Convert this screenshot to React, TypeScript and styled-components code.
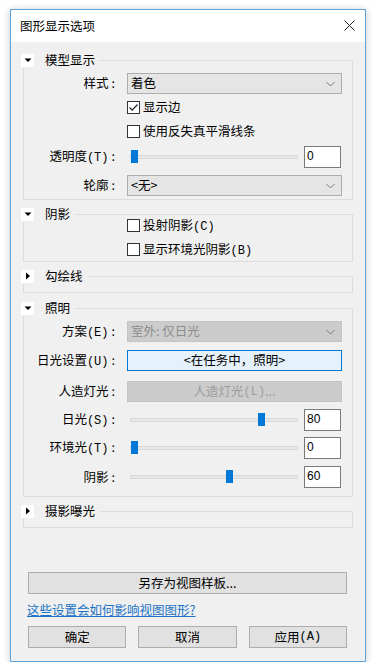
import React from "react";
import styled, { createGlobalStyle } from "styled-components";

const GlobalStyle = createGlobalStyle`
    html, body {
        margin: 0;
        background: #ffffff;
    }
    body {
        font-family: "Noto Sans CJK SC", "Liberation Sans", sans-serif;
        font-size: 12.5px;
        color: #000;
    }
    * {
        box-sizing: border-box;
    }
`;

const Page = styled.div`
    padding: 9px 0 0 10px;
`;

const Dialog = styled.div`
    width: 356px;
    height: 653px;
    border: 1px solid #5ea3db;
    box-shadow: 0 1px 8px rgba(0, 0, 0, 0.22);
    background: #f0f0f0;
    display: flex;
    flex-direction: column;
`;

const TitleBar = styled.div`
    height: 32px;
    background: #ffffff;
    display: flex;
    align-items: center;
    justify-content: space-between;
    padding: 0 10px 0 9px;
    line-height: 1;
`;

const Close = styled.div`
    width: 11px;
    height: 11px;
    display: flex;
    margin-top: -1px;
`;

const Body = styled.div`
    flex: 1;
    display: flex;
    flex-direction: column;
    padding: 18px 12px 13px;
`;

const Group = styled.div<{ $mt: number; $pb: number }>`
    border: 1px solid #dcdcdc;
    margin-top: ${(p) => p.$mt}px;
    padding-bottom: ${(p) => p.$pb}px;
    display: flex;
    flex-direction: column;
`;

const Header = styled.div`
    align-self: flex-start;
    display: flex;
    align-items: center;
    height: 16px;
    margin: -9px 0 -7px -3px;
    padding-right: 5px;
    background: #f0f0f0;
    line-height: 1;
`;

const Toggle = styled.div`
    width: 13px;
    height: 13px;
    background: #ffffff;
    display: flex;
    align-items: center;
    justify-content: center;
`;

const HeadText = styled.span`
    margin-left: 11px;
`;

const Row = styled.div<{ $mt: number }>`
    display: grid;
    grid-template-columns: 91px 1fr;
    column-gap: 12px;
    align-items: center;
    height: 21px;
    margin-top: ${(p) => p.$mt}px;
    padding-right: 10px;
    line-height: 1;
`;

const Label = styled.span`
    text-align: right;
    white-space: nowrap;
`;

const Colon = styled.span`
    margin-left: 3px;
`;

const Key = styled.span`
    font-family: "Liberation Mono", monospace;
    font-size: 12px;
`;

const Select = styled.div<{ $disabled?: boolean }>`
    height: 21px;
    display: flex;
    align-items: center;
    justify-content: space-between;
    padding: 0 6px 0 3px;
    border: 1px solid ${(p) => (p.$disabled ? "#c4c4c4" : "#adadad")};
    background: ${(p) => (p.$disabled ? "#cccccc" : "#e5e5e5")};
    color: ${(p) => (p.$disabled ? "#8d8d8d" : "#000")};
`;

const WideButton = styled.div<{ $variant: "focus" | "disabled" }>`
    height: 21px;
    display: flex;
    align-items: center;
    justify-content: center;
    border: 1px solid ${(p) => (p.$variant === "focus" ? "#0078d7" : "#c4c4c4")};
    background: ${(p) => (p.$variant === "focus" ? "#e5f1fb" : "#cccccc")};
    color: ${(p) => (p.$variant === "focus" ? "#000" : "#9c9c9c")};
`;

const CheckLine = styled.div`
    display: flex;
    align-items: center;
`;

const Box = styled.div`
    width: 13px;
    height: 13px;
    border: 1px solid #333333;
    background: #ffffff;
    display: flex;
    align-items: center;
    justify-content: center;
    margin-right: 3px;
`;

const SliderLine = styled.div`
    display: flex;
    align-items: center;
`;

const Track = styled.div`
    flex: 1;
    height: 4px;
    margin-left: 3px;
    background: #e7e7e7;
    border: 1px solid #d9d9d9;
    position: relative;
`;

const Thumb = styled.div`
    position: absolute;
    top: -6px;
    width: 7px;
    height: 13px;
    background: #0078d7;
`;

const NumBox = styled.div`
    width: 37px;
    height: 22px;
    margin: 0 1px 0 6px;
    border: 1px solid #7a7a7a;
    background: #ffffff;
    padding: 3px 0 0 2px;
    font-family: "Liberation Sans", Arial, sans-serif;
    font-size: 12px;
`;

const Footer = styled.div`
    margin-top: auto;
    padding: 0 6px 0 5px;
    display: flex;
    flex-direction: column;
`;

const Button = styled.div`
    height: 22px;
    display: flex;
    align-items: center;
    justify-content: center;
    border: 1px solid #adadad;
    background: #e1e1e1;
    line-height: 1;
`;

const HelpLink = styled.a`
    margin: 8px 0 8px -1px;
    line-height: 16px;
    color: #1a73c4;
    text-decoration: underline;
    cursor: pointer;
`;

const ButtonRow = styled.div`
    display: grid;
    grid-template-columns: repeat(3, 1fr);
    column-gap: 12px;
`;

const Caret = ({ open }: { open: boolean }) => (
    <svg width="8" height="8" viewBox="0 0 8 8">
        {open ? <polygon points="0.5,2.5 7.5,2.5 4,6" fill="#000" /> : <polygon points="2,0.5 6,4 2,7.5" fill="#000" />}
    </svg>
);

const Chevron = () => (
    <svg width="9" height="6" viewBox="0 0 9 6">
        <polyline points="0.5,1 4.5,5 8.5,1" fill="none" stroke="#7a7a7a" strokeWidth="1" />
    </svg>
);

const Checkbox: React.FC<{ checked?: boolean; children: React.ReactNode }> = ({ checked, children }) => (
    <CheckLine>
        <Box>
            {checked && (
                <svg width="11" height="11" viewBox="0 0 11 11">
                    <polyline points="1.5,5.5 4.2,8.2 9.5,2.5" fill="none" stroke="#222" strokeWidth="1.2" />
                </svg>
            )}
        </Box>
        <span>{children}</span>
    </CheckLine>
);

const Slider: React.FC<{ value: number }> = ({ value }) => (
    <SliderLine>
        <Track>
            <Thumb style={{ left: `calc((100% - 7px) * ${value / 100})` }} />
        </Track>
        <NumBox>{value}</NumBox>
    </SliderLine>
);

const Section: React.FC<{ title: string; open?: boolean; mt: number; pb: number; children?: React.ReactNode }> = ({ title, open = true, mt, pb, children }) => (
    <Group $mt={mt} $pb={pb}>
        <Header>
            <Toggle>
                <Caret open={open} />
            </Toggle>
            <HeadText>{title}</HeadText>
        </Header>
        {children}
    </Group>
);

const App: React.FC = () => {
    return (
        <Page>
            <GlobalStyle />
            <Dialog>
                <TitleBar>
                    <span>图形显示选项</span>
                    <Close>
                        <svg width="11" height="11" viewBox="0 0 11 11">
                            <path d="M0.5 0.5 L10.5 10.5 M10.5 0.5 L0.5 10.5" stroke="#222" strokeWidth="1" />
                        </svg>
                    </Close>
                </TitleBar>
                <Body>
                    <Section title="模型显示" mt={0} pb={3}>
                        <Row $mt={12}>
                            <Label>样式<Colon>:</Colon></Label>
                            <Select>
                                <span>着色</span>
                                <Chevron />
                            </Select>
                        </Row>
                        <Row $mt={3}>
                            <span />
                            <Checkbox checked>显示边</Checkbox>
                        </Row>
                        <Row $mt={3}>
                            <span />
                            <Checkbox>使用反失真平滑线条</Checkbox>
                        </Row>
                        <Row $mt={4}>
                            <Label>透明度<Key>(T)</Key><Colon>:</Colon></Label>
                            <Slider value={0} />
                        </Row>
                        <Row $mt={8}>
                            <Label>轮廓<Colon>:</Colon></Label>
                            <Select>
                                <span>&lt;无&gt;</span>
                                <Chevron />
                            </Select>
                        </Row>
                    </Section>

                    <Section title="阴影" mt={14} pb={1}>
                        <Row $mt={0}>
                            <span />
                            <Checkbox>投射阴影<Key>(C)</Key></Checkbox>
                        </Row>
                        <Row $mt={3}>
                            <span />
                            <Checkbox>显示环境光阴影<Key>(B)</Key></Checkbox>
                        </Row>
                    </Section>

                    <Section title="勾绘线" open={false} mt={14} pb={15} />

                    <Section title="照明" mt={15} pb={9}>
                        <Row $mt={12}>
                            <Label>方案<Key>(E)</Key><Colon>:</Colon></Label>
                            <Select $disabled>
                                <span>室外: 仅日光</span>
                                <Chevron />
                            </Select>
                        </Row>
                        <Row $mt={8}>
                            <Label>日光设置<Key>(U)</Key><Colon>:</Colon></Label>
                            <WideButton $variant="focus">&lt;在任务中，照明&gt;</WideButton>
                        </Row>
                        <Row $mt={10}>
                            <Label>人造灯光<Colon>:</Colon></Label>
                            <WideButton $variant="disabled">人造灯光<Key>(L)</Key>...</WideButton>
                        </Row>
                        <Row $mt={7}>
                            <Label>日光<Key>(S)</Key><Colon>:</Colon></Label>
                            <Slider value={80} />
                        </Row>
                        <Row $mt={7}>
                            <Label>环境光<Key>(T)</Key><Colon>:</Colon></Label>
                            <Slider value={0} />
                        </Row>
                        <Row $mt={8}>
                            <Label>阴影<Colon>:</Colon></Label>
                            <Slider value={60} />
                        </Row>
                    </Section>

                    <Section title="摄影曝光" open={false} mt={14} pb={15} />

                    <Footer>
                        <Button>另存为视图样板...</Button>
                        <HelpLink>这些设置会如何影响视图图形?</HelpLink>
                        <ButtonRow>
                            <Button>确定</Button>
                            <Button>取消</Button>
                            <Button>应用<Key>(A)</Key></Button>
                        </ButtonRow>
                    </Footer>
                </Body>
            </Dialog>
        </Page>
    );
};

export default App;
